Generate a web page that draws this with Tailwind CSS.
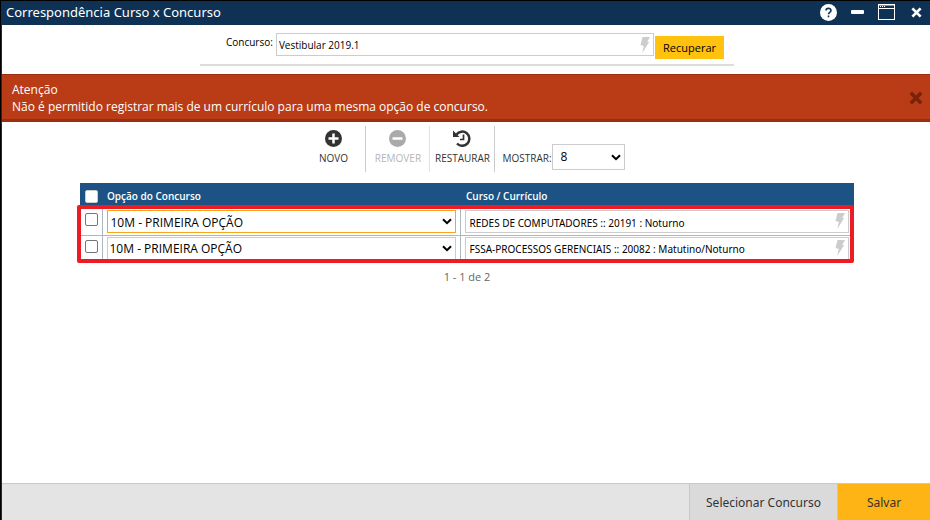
<!DOCTYPE html>
<html lang="pt-BR">
<head>
    <meta charset="UTF-8">
    <meta name="viewport" content="width=device-width, initial-scale=1.0">
    <title>Correspondência Curso x Concurso</title>
    <script src="https://cdn.jsdelivr.net/npm/@tailwindcss/browser@4"></script>
</head>

<body class="bg-white font-['Open_Sans','Noto_Sans',sans-serif] text-[11px] text-black">
    <!-- Shared icons -->
    <svg class="hidden">
        <symbol id="bolt" viewBox="0 0 10 16"><path d="M2.500 0H10L7.200 5H9.200L2.200 16L3.800 9L0.500 8Z" fill="currentColor" /></symbol>
        <symbol id="chevron" viewBox="0 0 10 7"><path d="M1 1.2L5 5.2L9 1.2" fill="none" stroke="currentColor" stroke-width="2" /></symbol>
        <symbol id="close" viewBox="0 0 12 12"><path d="M1.5 1.5L10.5 10.5M10.5 1.5L1.5 10.5" stroke="currentColor" stroke-width="3" /></symbol>
    </svg>

    <div class="flex min-h-screen flex-col border-t border-l border-black">
        <div class="flex grow flex-col border-l border-[#0f3254]">
            <!-- Title bar -->
            <header class="flex h-6 items-center justify-between bg-[#0f3254] pr-2 pb-0.5 pl-1 text-white">
                <h1 class="font-['Noto_Sans',sans-serif] text-[13px] leading-5">Correspondência Curso x Concurso</h1>
                <div class="flex items-center gap-3.5">
                    <button type="button" aria-label="Ajuda">
                        <svg class="block size-[17px]" viewBox="0 0 17 17">
                            <circle cx="8.500" cy="8.500" r="8.500" fill="#fff" />
                            <path d="M6 6.600C6 3.600 11 3.600 11 6.500C11 8.400 8.500 8.300 8.500 10.300M8.500 11.600V13.200" fill="none" stroke="#0f3254" stroke-width="1.600" />
                        </svg>
                    </button>
                    <button type="button" aria-label="Minimizar">
                        <svg class="block h-4 w-[13px]" viewBox="0 0 13 16"><rect y="6" width="13" height="4" rx="1" fill="#fff" /></svg>
                    </button>
                    <button type="button" aria-label="Maximizar">
                        <svg class="block h-4 w-[17px]" viewBox="0 0 17 16">
                            <rect x=".5" y=".5" width="16" height="15" fill="none" stroke="#fff" />
                            <path d="M1 1.500H16" stroke="#8296aa" />
                            <path d="M2 2.500H8" stroke="#fff" stroke-dasharray="1 1" />
                            <path d="M1 4.500H16" stroke="#fff" />
                        </svg>
                    </button>
                    <button type="button" aria-label="Fechar" class="pl-0.5"><svg class="block size-[11px]"><use href="#close" /></svg></button>
                </div>
            </header>

            <main class="grow pl-0.5">
                <!-- Search -->
                <form class="mx-auto mt-2 flex max-w-[534px] border-b-2 border-[#dcdcdc] pr-2.5 pb-1 pl-[26px]">
                    <label for="concurso" class="mr-[3px] pt-px text-[10px] leading-4">Concurso:</label>
                    <div class="relative mr-px mb-1 grow">
                        <input id="concurso" type="text" value="Vestibular 2019.1" class="block h-[23px] w-full border border-[#ccc] px-0.5 text-[10px]">
                        <svg class="absolute top-1 right-1 h-4 w-2.5 text-[#ccc]"><use href="#bolt" /></svg>
                    </div>
                    <button type="button" class="mt-[3px] h-[23px] bg-[#ffc20e] px-2 pt-0.5 text-[11px]">Recuperar</button>
                </form>

                <!-- Alert -->
                <div role="alert" class="mt-2 -ml-0.5 flex items-center justify-between border-t border-b-3 border-[#9b2e10] bg-[#b93c17] pt-1.5 pr-[7px] pb-1 pl-2.5 text-white">
                    <div class="text-xs leading-[17px]">
                        <p>Atenção</p>
                        <p>Não é permitido registrar mais de um currículo para uma mesma opção de concurso.</p>
                    </div>
                    <button type="button" aria-label="Fechar aviso" class="text-[#7a2208]"><svg class="block size-3.5"><use href="#close" /></svg></button>
                </div>

                <!-- Toolbar -->
                <div class="mt-1 flex h-[46px] justify-center text-[10px] text-[#333]">
                    <button type="button" class="flex w-[57px] flex-col items-center gap-1 border-r border-[#ccc] pt-1 pr-2">
                        <svg class="size-[17px]" viewBox="0 0 17 17"><circle cx="8.500" cy="8.500" r="8.500" fill="#333" /><path d="M3.500 8.500H13.500M8.500 3.500V13.500" stroke="#fff" stroke-width="2.500" /></svg>
                        <span>NOVO</span>
                    </button>
                    <button type="button" disabled class="flex w-16 flex-col items-center gap-1 border-r border-[#e2e2e2] pt-1 text-[#b5b5b5]">
                        <svg class="size-[17px]" viewBox="0 0 17 17"><circle cx="8.500" cy="8.500" r="8.500" fill="#aaa" /><path d="M3.500 8.500H13.500" stroke="#fff" stroke-width="2.500" /></svg>
                        <span>REMOVER</span>
                    </button>
                    <button type="button" class="flex w-[65px] flex-col items-center gap-1 border-r border-[#ccc] pt-1">
                        <svg class="h-[17px] w-[18px]" viewBox="0 0 18 17" fill="none" stroke="#333">
                            <path d="M3.500 4.500A7.100 7.100 0 1 1 4 13.500" stroke-width="2.500" />
                            <path d="M0 .5V7H6.500Z" fill="#333" stroke="none" />
                            <path d="M10.500 4.500V9.500H7" stroke-width="1.700" />
                        </svg>
                        <span>RESTAURAR</span>
                    </button>
                    <label for="mostrar" class="ml-[7px] pt-[25px]">MOSTRAR:</label>
                    <div class="relative mt-[18px] h-[26px] w-[73px] text-black">
                        <select id="mostrar" class="size-full appearance-none border border-[#ccc] px-2 text-xs"><option>8</option></select>
                        <svg class="pointer-events-none absolute top-2.5 right-1 h-[7px] w-2.5"><use href="#chevron" /></svg>
                    </div>
                </div>

                <!-- Options table -->
                <div class="relative mx-auto mt-[11px] max-w-[774px]">
                    <table class="w-full table-fixed border-collapse">
                        <thead>
                            <tr class="h-[26px] bg-[#1c5384] text-left text-[10px] text-white">
                                <th class="w-[22px] pl-[5px]"><input type="checkbox" aria-label="Selecionar todos" class="block size-[13px] appearance-none rounded-xs border border-[#ccc] bg-white"></th>
                                <th class="w-[358px] pl-[5px] font-semibold">Opção do Concurso</th>
                                <th class="pl-1.5 font-semibold">Curso / Currículo</th>
                            </tr>
                        </thead>
                        <tbody>
                            <tr class="h-[26px] border-b border-[#a9b9bd]">
                                <td class="border-r border-[#a9b9bd] pb-1 pl-[5px]"><input type="checkbox" aria-label="Selecionar linha 1" class="block size-[13px] appearance-none rounded-xs border border-[#767676] bg-white"></td>
                                <td class="border-r border-[#a9b9bd] px-1">
                                    <div class="relative">
                                        <select aria-label="Opção do Concurso 1" class="block h-[23px] w-full appearance-none border border-[#f9a61a] px-[3px] pt-0.5 text-xs"><option>10M - PRIMEIRA OPÇÃO</option></select>
                                        <svg class="pointer-events-none absolute top-2 right-1 h-[7px] w-2.5"><use href="#chevron" /></svg>
                                    </div>
                                </td>
                                <td class="pr-[5px] pl-1">
                                    <div class="relative">
                                        <input type="text" aria-label="Curso / Currículo 1" value="REDES DE COMPUTADORES :: 20191 : Noturno" class="block h-[23px] w-full border border-[#ccc] px-1 pt-0.5 font-['Noto_Sans',sans-serif] text-[10px]">
                                        <svg class="absolute top-[3px] right-1 h-4 w-2.5 text-[#ccc]"><use href="#bolt" /></svg>
                                    </div>
                                </td>
                            </tr>
                            <tr class="h-[26px]">
                                <td class="border-r border-[#a9b9bd] pb-1 pl-[5px]"><input type="checkbox" aria-label="Selecionar linha 2" class="block size-[13px] appearance-none rounded-xs border border-[#767676] bg-white"></td>
                                <td class="border-r border-[#a9b9bd] px-1">
                                    <div class="relative">
                                        <select aria-label="Opção do Concurso 2" class="block h-[23px] w-full appearance-none border border-[#ccc] px-0.5 pt-0.5 text-xs"><option>10M - PRIMEIRA OPÇÃO</option></select>
                                        <svg class="pointer-events-none absolute top-2 right-1 h-[7px] w-2.5"><use href="#chevron" /></svg>
                                    </div>
                                </td>
                                <td class="pr-[5px] pl-1">
                                    <div class="relative">
                                        <input type="text" aria-label="Curso / Currículo 2" value="FSSA-PROCESSOS GERENCIAIS :: 20082 : Matutino/Noturno" class="block h-[23px] w-full border border-[#ccc] px-1 pt-0.5 font-['Noto_Sans',sans-serif] text-[10px]">
                                        <svg class="absolute top-[3px] right-1 h-4 w-2.5 text-[#ccc]"><use href="#bolt" /></svg>
                                    </div>
                                </td>
                            </tr>
                        </tbody>
                    </table>
                    <!-- Highlight around the duplicated rows -->
                    <div class="pointer-events-none absolute top-[22px] right-0 -bottom-0.5 -left-[3px] rounded-xs border-4 border-[#ed1c24]"></div>
                </div>
                <p class="mt-2 text-center leading-4 text-[#666]">1 - 1 de 2</p>
            </main>

            <!-- Footer -->
            <footer class="flex h-[37px] justify-end border-t border-[#c8c8c8] bg-[#e4e4e4] font-['Noto_Sans',sans-serif] text-xs text-[#333]">
                <button type="button" class="border-x border-[#c8c8c8] bg-[#dadada] px-4 pt-0.5">Selecionar Concurso</button>
                <button type="button" class="w-[92px] bg-[#ffb416] pt-0.5">Salvar</button>
            </footer>
        </div>
    </div>
</body>
</html>
